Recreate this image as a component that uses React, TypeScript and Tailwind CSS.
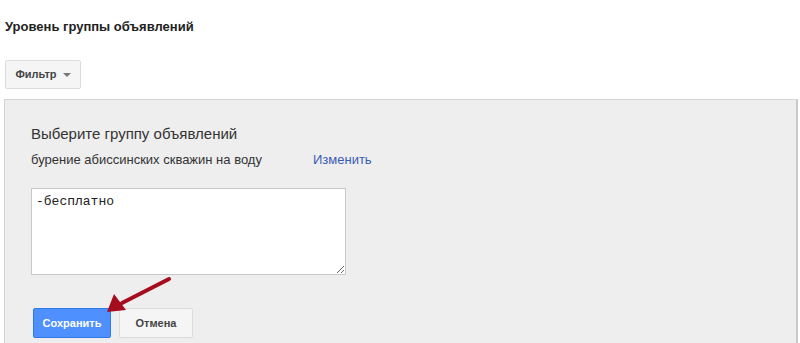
import React from "react";

export default function App() {
  return (
    <div className="w-[800px] h-[343px] bg-white overflow-hidden relative" style={{ fontFamily: '"Liberation Sans", Arial, sans-serif' }}>
      <div className="pt-[19px] pl-[5px] text-[13px] font-bold text-[#222] leading-[16px]">Уровень группы объявлений</div>
      <div className="pl-[5px] mt-[25px]">
        <div className="w-[76px] h-[29px] border border-[#dcdcdc] rounded-[2px] bg-[#f5f5f5] flex items-center justify-center gap-[6px] text-[11px] font-bold text-[#444]">
          <span>Фильтр</span>
          <span className="w-0 h-0 border-l-[4px] border-r-[4px] border-t-[4px] border-l-transparent border-r-transparent border-t-[#777]"></span>
        </div>
      </div>
      <div className="ml-[4px] mt-[10px] w-[794px] h-[260px] bg-[#eeeeee] border-t border-l border-[#d5d5d5] border-r-2 border-r-[#c8c8c8] pl-[26px] pt-[25px]">
        <div className="text-[15px] text-[#333] leading-[18px]">Выберите группу объявлений</div>
        <div className="mt-[9px] flex text-[13px] text-[#333] leading-[16px]">
          <span className="w-[282px]">бурение абиссинских скважин на воду</span>
          <span className="text-[#3b5bb5]">Изменить</span>
        </div>
        <textarea
          className="mt-[20px] block w-[315px] h-[87px] bg-white border border-[#c8c8c8] px-[4px] py-[3px] text-[13px] text-[#222] outline-none"
          style={{ fontFamily: '"Liberation Mono", "Courier New", monospace' }}
          defaultValue="-бесплатно"
        />
        <div className="mt-[33px] ml-[2px] flex gap-[8px]">
          <div className="w-[78px] h-[30px] rounded-[2px] bg-[#4d90fe] border border-[#3079ed] flex items-center justify-center text-[11px] font-bold text-white">Сохранить</div>
          <div className="w-[74px] h-[30px] rounded-[2px] bg-[#f5f5f5] border border-[#dcdcdc] flex items-center justify-center text-[11px] font-bold text-[#444]">Отмена</div>
        </div>
      </div>
      <svg className="absolute left-0 top-0" width="800" height="343" viewBox="0 0 800 343">
        <line x1="169" y1="279" x2="122" y2="303" stroke="#a50d1f" strokeWidth="4" strokeLinecap="round" />
        <polygon points="107,312 114,294 126,310" fill="#a50d1f" />
      </svg>
    </div>
  );
}
